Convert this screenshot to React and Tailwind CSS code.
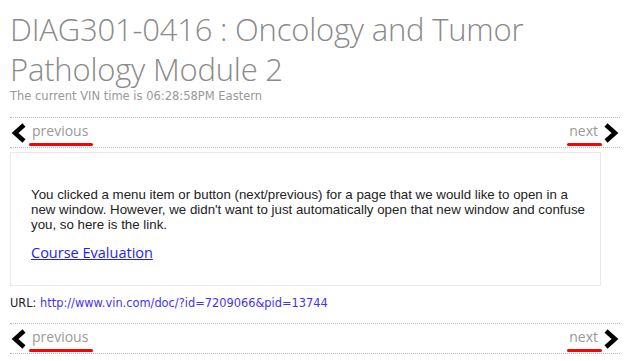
const Chevron = ({ dir }) => (
  <svg width="16" height="20" viewBox="0 0 16 20" className="shrink-0">
    <polyline
      points={dir === "left" ? "13,2 4,10 13,18" : "3,2 12,10 3,18"}
      fill="none"
      stroke="#000"
      strokeWidth="4.5"
    />
  </svg>
);

const NavBar = () => (
  <div className="flex items-center justify-between w-[610px] h-[31px] border-y border-dotted border-[#bbb]">
    <div className="flex items-center ml-[1px]">
      <Chevron dir="left" />
      <a className="relative ml-[5px] text-[14px] leading-none text-[#999] font-['Open_Sans',sans-serif] -mt-[4px]">
        previous
        <span className="absolute left-[-3px] right-[-5px] top-[19px] h-[3px] rounded-full bg-[#f00]" />
      </a>
    </div>
    <div className="flex items-center mr-[1px]">
      <a className="relative mr-[5px] text-[14px] leading-none text-[#999] font-['Open_Sans',sans-serif] -mt-[4px]">
        next
        <span className="absolute left-[-2px] right-[-4px] top-[19px] h-[3px] rounded-full bg-[#f00]" />
      </a>
      <Chevron dir="right" />
    </div>
  </div>
);

export default function App() {
  return (
    <div className="w-[626px] h-[361px] bg-white pl-[10px] pt-[9px] overflow-hidden">
      <h1 className="text-[31px] leading-[40px] font-light text-[#8a8a8a] font-['Open_Sans',sans-serif] tracking-[-0.2px]">
        DIAG301-0416 : Oncology and Tumor
        <br />
        Pathology Module 2
      </h1>
      <p className="text-[11.5px] leading-[14px] mb-[14px] text-[#999] font-['DejaVu_Sans',sans-serif]">
        The current VIN time is 06:28:58PM Eastern
      </p>
      <NavBar />
      <div className="w-[591px] h-[134px] mt-[4px] border border-[#eaeaea] pl-[20px] pr-[6px] pt-[34px] font-['Liberation_Sans',Arial,sans-serif] text-[13.3px] leading-[15px] text-[#222]">
        <p>
          You clicked a menu item or button (next/previous) for a page that we would like to open in a new window.
          However, we didn't want to just automatically open that new window and confuse you, so here is the link.
        </p>
        <a className="block mt-[13px] text-[14.5px] text-[#22e] underline font-['Open_Sans',sans-serif]">Course Evaluation</a>
      </div>
      <p className="mt-[10px] mb-[13px] text-[11.4px] leading-[14px] font-['DejaVu_Sans',sans-serif] text-[#222]">
        URL: <a className="text-[#4433ee]">http://www.vin.com/doc/?id=7209066&amp;pid=13744</a>
      </p>
      <NavBar />
    </div>
  );
}
